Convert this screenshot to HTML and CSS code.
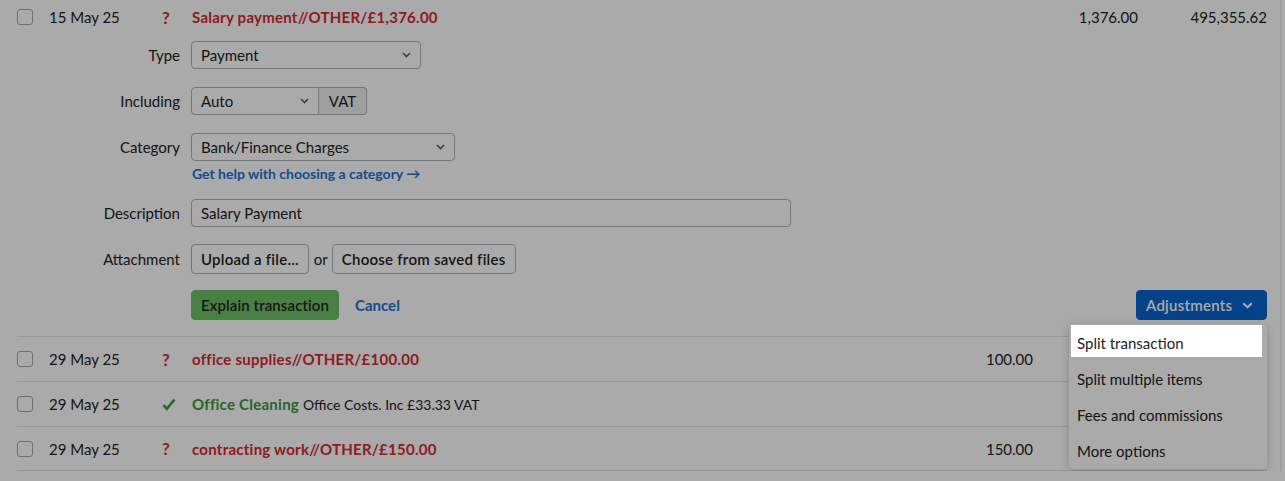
FILE: index.html
```html
<!DOCTYPE html>
<html lang="en">

<head>
  <meta charset="UTF-8" />
  <meta name="viewport" content="width=device-width, initial-scale=1.0" />
  <title>Bank Transactions</title>
  <link rel="stylesheet" href="styles.css">
</head>

<body>
  <div class="ledger">

    <!-- Open transaction -->
    <div class="txn">
      <div class="txn-row">
        <span class="check"></span>
        <span class="date">15 May 25</span>
        <span class="status unexplained">?</span>
        <span class="desc"><b class="red">Salary payment//OTHER/£1,376.00</b></span>
        <span class="money"></span>
        <span class="money">1,376.00</span>
        <span class="money">495,355.62</span>
      </div>

      <div class="explain-form">
        <label class="field-label">Type</label>
        <div class="field">
          <div class="select w-type">
            <span>Payment</span>
            <svg class="chev" width="9" height="6" viewBox="0 0 9 6"><path d="M1 1l3.5 3.5L8 1" fill="none" stroke="#5b6168" stroke-width="1.6"/></svg>
          </div>
        </div>

        <label class="field-label">Including</label>
        <div class="field">
          <div class="input-group">
            <div class="select w-vat">
              <span>Auto</span>
              <svg class="chev" width="9" height="6" viewBox="0 0 9 6"><path d="M1 1l3.5 3.5L8 1" fill="none" stroke="#5b6168" stroke-width="1.6"/></svg>
            </div>
            <span class="addon">VAT</span>
          </div>
        </div>

        <label class="field-label">Category</label>
        <div class="field">
          <div class="select w-cat">
            <span>Bank/Finance Charges</span>
            <svg class="chev" width="9" height="6" viewBox="0 0 9 6"><path d="M1 1l3.5 3.5L8 1" fill="none" stroke="#5b6168" stroke-width="1.6"/></svg>
          </div>
          <a class="help-link" href="#">Get help with choosing a category →</a>
        </div>

        <label class="field-label">Description</label>
        <div class="field">
          <div class="text-input">Salary Payment</div>
        </div>

        <label class="field-label">Attachment</label>
        <div class="field attach">
          <button class="btn">Upload a file...</button>
          <span class="or">or</span>
          <button class="btn">Choose from saved files</button>
        </div>

        <span></span>
        <div class="field actions">
          <button class="btn btn-green">Explain transaction</button>
          <a class="cancel" href="#">Cancel</a>
          <div class="dropdown">
            <button class="btn btn-blue">Adjustments
              <svg width="11" height="7" viewBox="0 0 11 7"><path d="M1.2 1.2L5.5 5.3l4.3-4.1" fill="none" stroke="#fff" stroke-width="2"/></svg>
            </button>
            <ul class="menu">
              <li class="active">Split transaction</li>
              <li>Split multiple items</li>
              <li>Fees and commissions</li>
              <li>More options</li>
            </ul>
          </div>
        </div>
      </div>
    </div>

    <!-- Other transactions -->
    <div class="txn-row line">
      <span class="check"></span>
      <span class="date">29 May 25</span>
      <span class="status unexplained">?</span>
      <span class="desc"><b class="red">office supplies//OTHER/£100.00</b></span>
      <span class="money">100.00</span>
      <span class="money"></span>
      <span class="money"></span>
    </div>
    <div class="txn-row line">
      <span class="check"></span>
      <span class="date">29 May 25</span>
      <span class="status">
        <svg width="14" height="13" viewBox="0 0 14 13"><path d="M1.5 7.2l3.4 3.6L12.5 1.5" fill="none" stroke="#3a9a3e" stroke-width="2.6"/></svg>
      </span>
      <span class="desc"><b class="green">Office Cleaning</b> <small>Office Costs. Inc £33.33 VAT</small></span>
      <span class="money"></span>
      <span class="money"></span>
      <span class="money"></span>
    </div>
    <div class="txn-row line last">
      <span class="check"></span>
      <span class="date">29 May 25</span>
      <span class="status unexplained">?</span>
      <span class="desc"><b class="red">contracting work//OTHER/£150.00</b></span>
      <span class="money">150.00</span>
      <span class="money"></span>
      <span class="money"></span>
    </div>
  </div>

  <div class="backdrop"></div>
</body>

</html>
```

FILE: styles.css
```css
body {
  margin: 0;
  background-color: #ffffff;
  color: #222222;
  font-family: "Lato", "Liberation Sans", sans-serif;
  font-size: 15px;
  overflow: hidden;
}

.ledger {
  padding: 0 13px 0 17px;
  border-right: 1px solid #e6e6e6;
  margin-right: 4px;
}

.txn-row {
  display: grid;
  grid-template-columns: 32px 113px 30px 1fr 120px 105px 129px;
  align-items: center;
  height: 34px;
}

.txn-row.line {
  height: 45px;
  box-sizing: border-box;
  border-top: 1px solid #e2e2e2;
}

.txn-row.last {
  border-bottom: 1px solid #e2e2e2;
}

.check {
  width: 14px;
  height: 14px;
  border: 1px solid #a3a8ad;
  border-radius: 3px;
  background-color: #ffffff;
}

.status {
  font-weight: 700;
  font-size: 17px;
  display: flex;
  align-items: center;
}

.unexplained {
  color: #d42a2f;
}

.desc b {
  letter-spacing: 0.25px;
}

.desc small {
  font-size: 14px;
}

.red {
  color: #d42a2f;
}

.green {
  color: #3a9a3e;
}

.money {
  text-align: right;
}

/* Explain form */
.explain-form {
  display: grid;
  grid-template-columns: 163px 1fr;
  column-gap: 11px;
  row-gap: 16px;
  padding: 6px 0 16px;
}

.field-label {
  text-align: right;
  line-height: 30px;
}

.field {
  display: flex;
  flex-direction: column;
  align-items: flex-start;
}

.select,
.text-input {
  height: 28px;
  margin: 1px 0;
  box-sizing: border-box;
  border: 1px solid #acb4bc;
  border-radius: 4px;
  background-color: #ffffff;
  display: flex;
  align-items: center;
  justify-content: space-between;
  padding: 0 9px 0 9px;
}

.w-type { width: 230px; }
.w-vat { width: 128px; border-radius: 4px 0 0 4px; }
.w-cat { width: 264px; }
.text-input { width: 600px; }

.input-group {
  display: flex;
}

.addon {
  height: 28px;
  margin: 1px 0;
  box-sizing: border-box;
  width: 48px;
  border: 1px solid #acb4bc;
  border-left: none;
  border-radius: 0 4px 4px 0;
  background-color: #efefef;
  display: flex;
  align-items: center;
  justify-content: center;
}

.help-link {
  margin-top: 3px;
  line-height: 17px;
  font-size: 14px;
  font-weight: 700;
  color: #1b72d6;
  text-decoration: none;
  padding-left: 1px;
}

.attach,
.actions {
  flex-direction: row;
  align-items: center;
}

.or {
  margin: 0 4px 0 5px;
}

.btn {
  height: 30px;
  box-sizing: border-box;
  padding: 0 9px;
  border: 1px solid #acb4bc;
  border-radius: 4px;
  background-color: #ffffff;
  font-family: inherit;
  font-size: 15px;
  font-weight: 600;
  letter-spacing: 0.25px;
  color: #222222;
}

.btn-green {
  background-color: #6cc167;
  border-color: #6cc167;
  letter-spacing: 0.1px;
}

.cancel {
  margin-left: 16px;
  color: #1b72d6;
  font-weight: 700;
  text-decoration: none;
}

.dropdown {
  margin-left: auto;
  position: relative;
}

.btn-blue {
  width: 131px;
  padding-right: 13px;
  background-color: #0a63cc;
  border-color: #0a63cc;
  color: #ffffff;
  display: flex;
  align-items: center;
  justify-content: space-between;
}

.menu {
  position: absolute;
  top: 34px;
  right: 0;
  width: 198px;
  box-sizing: border-box;
  margin: 0;
  padding: 1px 5px 4px 2px;
  list-style: none;
  background-color: #ffffff;
  border-radius: 4px;
  box-shadow: 0 2px 8px rgba(0, 0, 0, 0.2);
  display: flex;
  flex-direction: column;
  gap: 4px;
}

.menu li {
  height: 32px;
  line-height: 36px;
  padding-left: 6px;
}

.menu li.active {
  position: relative;
  z-index: 20;
  background-color: #ffffff;
}

.backdrop {
  position: fixed;
  inset: 0;
  background-color: rgba(0, 0, 0, 0.333);
  z-index: 10;
}
```
